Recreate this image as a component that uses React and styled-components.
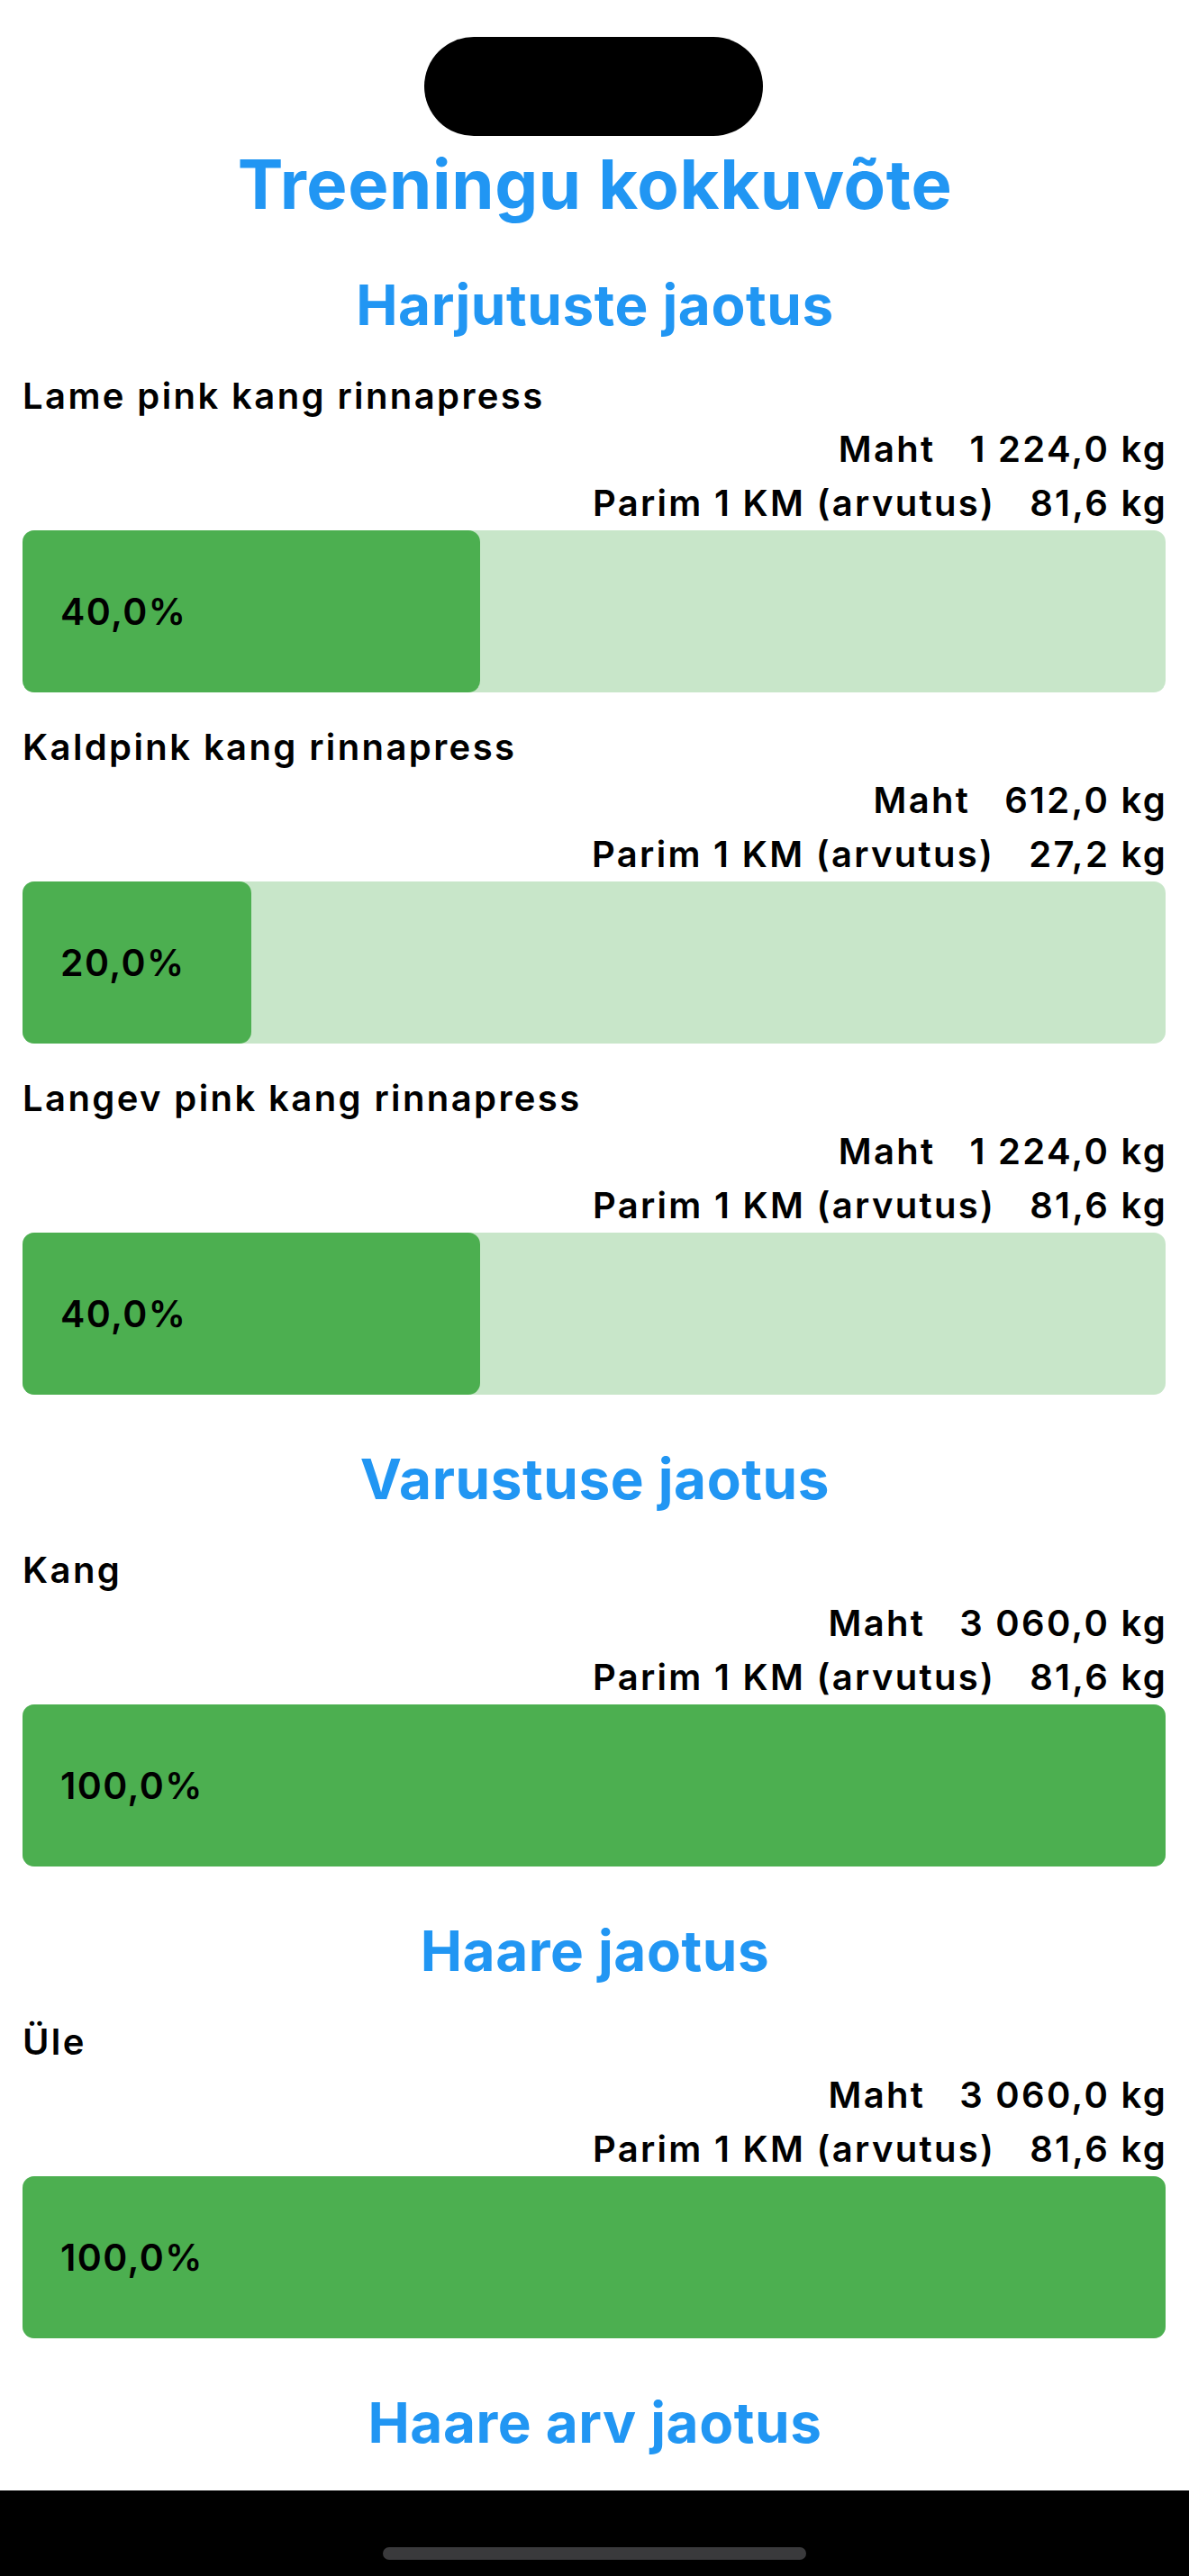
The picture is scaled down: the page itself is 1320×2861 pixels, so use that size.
import React from 'react';
import styled, { createGlobalStyle } from 'styled-components';

const GlobalStyle = createGlobalStyle`
  html, body {
    margin: 0;
    padding: 0;
    background: #fff;
  }
  body {
    font-family: Inter, "Noto Sans", "Liberation Sans", sans-serif;
    -webkit-font-smoothing: antialiased;
  }
`;

const Screen = styled.div`
  position: relative;
  width: 1320px;
  height: 2861px;
  overflow: hidden;
  background: #fff;
`;

const Island = styled.div`
  position: absolute;
  top: 41px;
  left: 471px;
  width: 376px;
  height: 110px;
  border-radius: 55px;
  background: #000;
`;

const Content = styled.div`
  display: flex;
  flex-direction: column;
  padding: 159px 24px 0 25px;
`;

const Title = styled.h1`
  margin: 0;
  font-size: 76px;
  line-height: 90px;
  font-weight: 700;
  letter-spacing: 0.6px;
  color: #2196f3;
  text-align: center;
`;

const Sections = styled.div`
  display: flex;
  flex-direction: column;
  gap: 58px;
  margin-top: 54px;
`;

const Section = styled.section`
  display: flex;
  flex-direction: column;
`;

const SectionTitle = styled.h2`
  margin: 0 0 42px;
  font-size: 62px;
  line-height: 72px;
  font-weight: 700;
  letter-spacing: 0.6px;
  color: #2196f3;
  text-align: center;
`;

const Items = styled.div`
  display: flex;
  flex-direction: column;
  gap: 38px;
`;

const Item = styled.div`
  display: flex;
  flex-direction: column;
`;

const ItemName = styled.div`
  font-size: 40px;
  line-height: 46px;
  font-weight: 600;
  letter-spacing: 2.4px;
  color: #000;
  margin-bottom: 6px;
`;

const StatRow = styled.div`
  display: flex;
  justify-content: flex-end;
  gap: 38px;
  font-size: 40px;
  line-height: 60px;
  font-weight: 600;
  letter-spacing: 2.3px;
  color: #000;
`;

const Track = styled.div`
  position: relative;
  height: 180px;
  border-radius: 13px;
  background: #c8e6c9;
  margin-right: 2px;
`;

const Fill = styled.div`
  height: 100%;
  border-radius: 13px;
  background: #4caf50;
`;

const Percent = styled.span`
  position: absolute;
  left: 42px;
  top: 0;
  bottom: 0;
  display: flex;
  align-items: center;
  font-size: 41px;
  font-weight: 600;
  letter-spacing: 1.4px;
  color: #000;
`;

const BottomBar = styled.div`
  position: absolute;
  left: 0;
  right: 0;
  bottom: 0;
  height: 95px;
  background: #000;
  display: flex;
  justify-content: center;
`;

const HomeIndicator = styled.div`
  margin-top: 63px;
  width: 470px;
  height: 14px;
  border-radius: 7px;
  background: #3a3a3c;
`;

const sections = [
  {
    title: 'Harjutuste jaotus',
    items: [
      { name: 'Lame pink kang rinnapress', volume: '1 224,0 kg', best: '81,6 kg', pct: 40 },
      { name: 'Kaldpink kang rinnapress', volume: '612,0 kg', best: '27,2 kg', pct: 20 },
      { name: 'Langev pink kang rinnapress', volume: '1 224,0 kg', best: '81,6 kg', pct: 40 },
    ],
  },
  {
    title: 'Varustuse jaotus',
    items: [{ name: 'Kang', volume: '3 060,0 kg', best: '81,6 kg', pct: 100 }],
  },
  {
    title: 'Haare jaotus',
    items: [{ name: 'Üle', volume: '3 060,0 kg', best: '81,6 kg', pct: 100 }],
  },
  {
    title: 'Haare arv jaotus',
    items: [],
  },
];

const fmtPct = (p) => `${p.toFixed(1).replace('.', ',')}%`;

const BreakdownItem = ({ item }) => (
  <Item>
    <ItemName>{item.name}</ItemName>
    <StatRow>
      <span>Maht</span>
      <span>{item.volume}</span>
    </StatRow>
    <StatRow>
      <span>Parim 1 KM (arvutus)</span>
      <span>{item.best}</span>
    </StatRow>
    <Track>
      <Fill style={{ width: `${item.pct}%` }} />
      <Percent>{fmtPct(item.pct)}</Percent>
    </Track>
  </Item>
);

export default function App() {
  return (
    <Screen>
      <GlobalStyle />
      <Content>
        <Title>Treeningu kokkuvõte</Title>
        <Sections>
          {sections.map((s) => (
            <Section key={s.title}>
              <SectionTitle>{s.title}</SectionTitle>
              {s.items.length > 0 && (
                <Items>
                  {s.items.map((it) => (
                    <BreakdownItem key={it.name} item={it} />
                  ))}
                </Items>
              )}
            </Section>
          ))}
        </Sections>
      </Content>
      <Island />
      <BottomBar>
        <HomeIndicator />
      </BottomBar>
    </Screen>
  );
}
